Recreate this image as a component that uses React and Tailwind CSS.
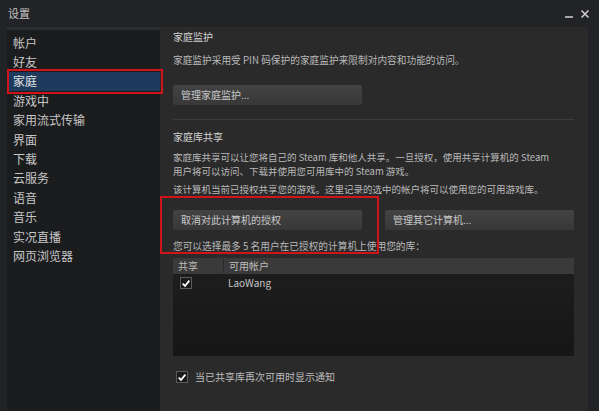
import React, { useState } from 'react';

const font = { fontFamily: '"Noto Sans CJK SC", "Noto Sans", sans-serif' };

const navItems = ['帐户', '好友', '家庭', '游戏中', '家用流式传输', '界面', '下载', '云服务', '语音', '音乐', '实况直播', '网页浏览器'];

function Check({ checked = true }) {
  return (
    <span className="flex h-[12px] w-[12px] items-center justify-center border border-[#5a5a5a] bg-[#1a1a1a]">
      {checked && (
        <svg viewBox="0 0 12 12" className="h-[11px] w-[11px]">
          <path d="M2 6.2 L4.8 9 L10 2.6" fill="none" stroke="#ffffff" strokeWidth="2.2" />
        </svg>
      )}
    </span>
  );
}

function SteamButton({ children }) {
  return (
    <button className="flex h-[20px] w-[189px] items-center rounded-[2px] bg-gradient-to-b from-[#434343] to-[#383838] px-[8px] text-[10px] text-[#c9c9c9]">
      {children}
    </button>
  );
}

export default function App() {
  const [active] = useState('家庭');

  return (
    <div className="relative flex h-[411px] w-[599px] flex-col overflow-hidden bg-[#222327] text-[#b9b9b9]" style={font}>
      {/* title bar */}
      <div className="flex h-[27px] items-center justify-between px-[8px]">
        <span className="text-[11px] text-[#c4c4c4]">设置</span>
        <div className="flex items-center gap-[6px] pr-[1px] pt-[1px]">
          <svg viewBox="0 0 10 10" className="h-[10px] w-[10px]">
            <path d="M1 8 H9" stroke="#c8c8c8" strokeWidth="1.6" />
          </svg>
          <svg viewBox="0 0 10 10" className="h-[10px] w-[10px]">
            <path d="M1.5 1.5 L8.5 8.5 M8.5 1.5 L1.5 8.5" stroke="#d0d0d0" strokeWidth="1.5" />
          </svg>
        </div>
      </div>

      <div className="flex flex-1 pl-[7px] pr-[11px]">
        {/* sidebar */}
        <div className="flex w-[153px] flex-col bg-[#1b1c1e]">
          <div className="h-[3px] bg-[#2c2d30]" />
          <div className="flex flex-col pt-[3px]">
            {navItems.map((item) => (
              <div
                key={item}
                className={`flex h-[19.4px] items-center pl-[6px] text-[12px] ${item === active ? 'bg-[#1d3b5d] text-[#e6e6e6]' : 'text-[#c7c7c7]'}`}
              >
                {item}
              </div>
            ))}
          </div>
        </div>

        {/* content */}
        <div className="flex flex-1 flex-col bg-[#2a2a2a] pl-[13px] pr-[14px] pt-[3px] text-[9.7px] leading-[14px]">
          <div className="text-[10px] text-[#d2d2d2]">家庭监护</div>
          <div className="mt-[9px]">家庭监护采用受 PIN 码保护的家庭监护来限制对内容和功能的访问。</div>
          <div className="mt-[18px]">
            <SteamButton>管理家庭监护...</SteamButton>
          </div>
          <div className="mt-[14px] h-px bg-[#3c3c3c]" />

          <div className="mt-[10px] text-[10px] text-[#d2d2d2]">家庭库共享</div>
          <div className="mt-[6px] flex flex-col text-[9.5px] leading-[14px]">
            <span>家庭库共享可以让您将自己的 Steam 库和他人共享。一旦授权，使用共享计算机的 Steam</span>
            <span>用户将可以访问、下载并使用您可用库中的 Steam 游戏。</span>
          </div>
          <div className="mt-[4px] text-[9.5px]">该计算机当前已授权共享您的游戏。这里记录的选中的帐户将可以使用您的可用游戏库。</div>
          <div className="mt-[14px] flex justify-between">
            <SteamButton>取消对此计算机的授权</SteamButton>
            <SteamButton>管理其它计算机...</SteamButton>
          </div>
          <div className="mt-[9px]">您可以选择最多 5 名用户在已授权的计算机上使用您的库：</div>

          <div className="mt-[5px] flex flex-col">
            <div className="flex h-[16px] items-center bg-[#3a3a3a] text-[10px] text-[#bdbdbd]">
              <span className="w-[50px] pl-[5px]">共享</span>
              <span className="border-l border-[#2a2a2a] pl-[5px]">可用帐户</span>
            </div>
            <div className="h-[82px] bg-gradient-to-b from-[#1d1d1d] to-[#161616]">
              <div className="flex h-[18px] items-center">
                <span className="w-[50px] pl-[7px]">
                  <Check />
                </span>
                <span className="pl-[5px] text-[10px] text-[#c4c4c4]">LaoWang</span>
              </div>
            </div>
          </div>

          <div className="mt-[14px] flex items-center gap-[7px] pl-[3px]">
            <Check />
            <span className="text-[10px] text-[#bcbcbc]">当已共享库再次可用时显示通知</span>
          </div>
        </div>
      </div>

      {/* highlight frames */}
      <div className="pointer-events-none absolute left-[7px] top-[69px] h-[25px] w-[156px] border-2 border-[#d0141a]" />
      <div className="pointer-events-none absolute left-[160px] top-[196px] h-[58px] w-[219px] border-2 border-[#d0141a]" />
    </div>
  );
}
